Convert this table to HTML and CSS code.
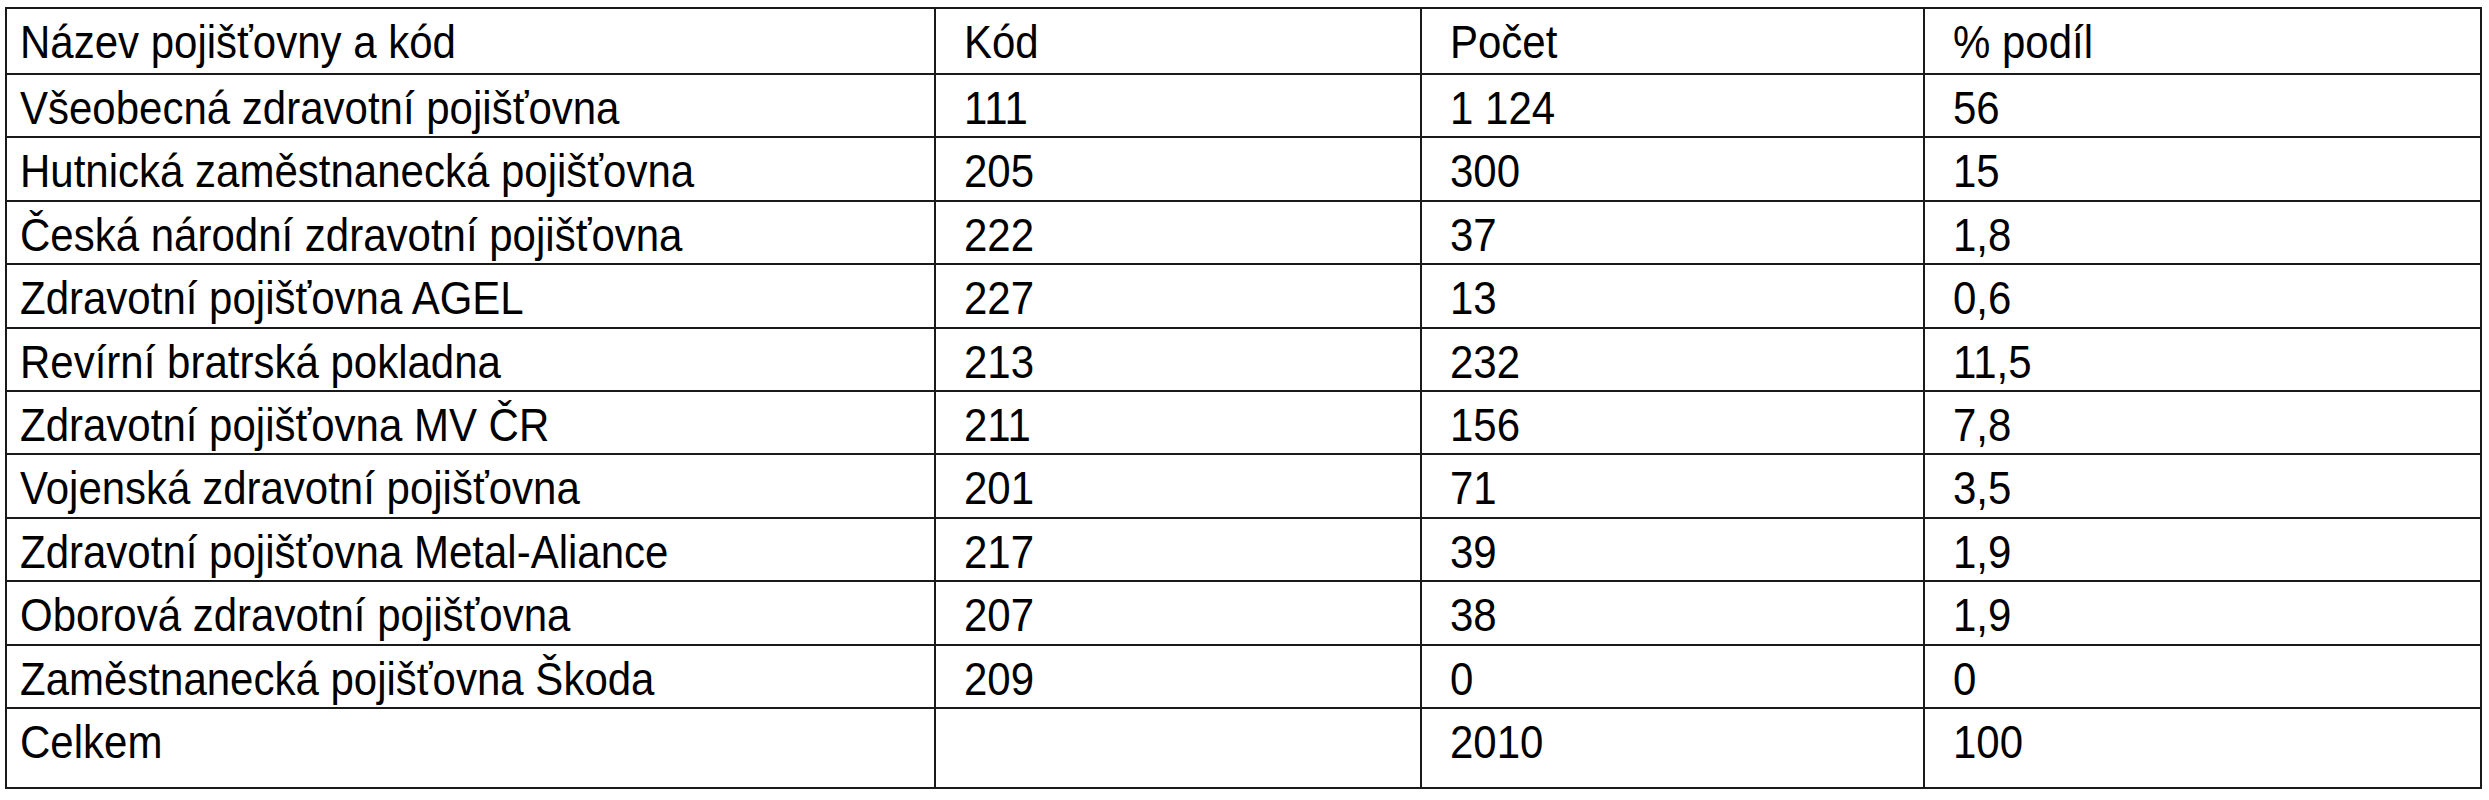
FILE: index.html
```html
<!DOCTYPE html>
<html lang="cs">
<head>
<meta charset="utf-8">
<title>Pojišťovny</title>
<link rel="stylesheet" href="styles.css">
</head>
<body>
<table class="grid">
  <colgroup>
    <col class="c-name">
    <col class="c-code">
    <col class="c-count">
    <col class="c-share">
  </colgroup>
  <tr class="head"><td><span>Název pojišťovny a kód</span></td><td><span>Kód</span></td><td><span>Počet</span></td><td><span>% podíl</span></td></tr>
  <tr><td><span>Všeobecná zdravotní pojišťovna</span></td><td><span>111</span></td><td><span>1 124</span></td><td><span>56</span></td></tr>
  <tr><td><span>Hutnická zaměstnanecká pojišťovna</span></td><td><span>205</span></td><td><span>300</span></td><td><span>15</span></td></tr>
  <tr><td><span>Česká národní zdravotní pojišťovna</span></td><td><span>222</span></td><td><span>37</span></td><td><span>1,8</span></td></tr>
  <tr><td><span>Zdravotní pojišťovna AGEL</span></td><td><span>227</span></td><td><span>13</span></td><td><span>0,6</span></td></tr>
  <tr><td><span>Revírní bratrská pokladna</span></td><td><span>213</span></td><td><span>232</span></td><td><span>11,5</span></td></tr>
  <tr><td><span>Zdravotní pojišťovna MV ČR</span></td><td><span>211</span></td><td><span>156</span></td><td><span>7,8</span></td></tr>
  <tr><td><span>Vojenská zdravotní pojišťovna</span></td><td><span>201</span></td><td><span>71</span></td><td><span>3,5</span></td></tr>
  <tr><td><span>Zdravotní pojišťovna Metal-Aliance</span></td><td><span>217</span></td><td><span>39</span></td><td><span>1,9</span></td></tr>
  <tr><td><span>Oborová zdravotní pojišťovna</span></td><td><span>207</span></td><td><span>38</span></td><td><span>1,9</span></td></tr>
  <tr><td><span>Zaměstnanecká pojišťovna Škoda</span></td><td><span>209</span></td><td><span>0</span></td><td><span>0</span></td></tr>
  <tr class="total"><td><span>Celkem</span></td><td></td><td><span>2010</span></td><td><span>100</span></td></tr>
</table>
</body>
</html>
```

FILE: styles.css
```css
html, body {
  margin: 0;
  padding: 0;
  background: #fff;
}
body {
  padding: 7px 0 0 5px;
  min-height: 800px;
  box-sizing: border-box;
}
.grid {
  border-collapse: collapse;
  table-layout: fixed;
  width: 2475px;
  font-family: "Liberation Sans", Arial, sans-serif;
  font-size: 42px;
  line-height: 46px;
  color: #000;
}
.c-name { width: 929px; }
.c-code { width: 486px; }
.c-count { width: 503px; }
.c-share { width: 557px; }
.grid td {
  border: 2px solid #1a1a1a;
  padding: 8px 14px 0 28px;
  vertical-align: top;
  white-space: nowrap;
  box-sizing: border-box;
  height: 63.4px;
}
.grid td span {
  display: inline-block;
  transform: scaleY(1.12);
  transform-origin: 0 0;
}
.grid td:first-child { padding-left: 13px; }
.grid tr.head td { height: 66px; }
.grid tr.total td { height: 80px; }
```
